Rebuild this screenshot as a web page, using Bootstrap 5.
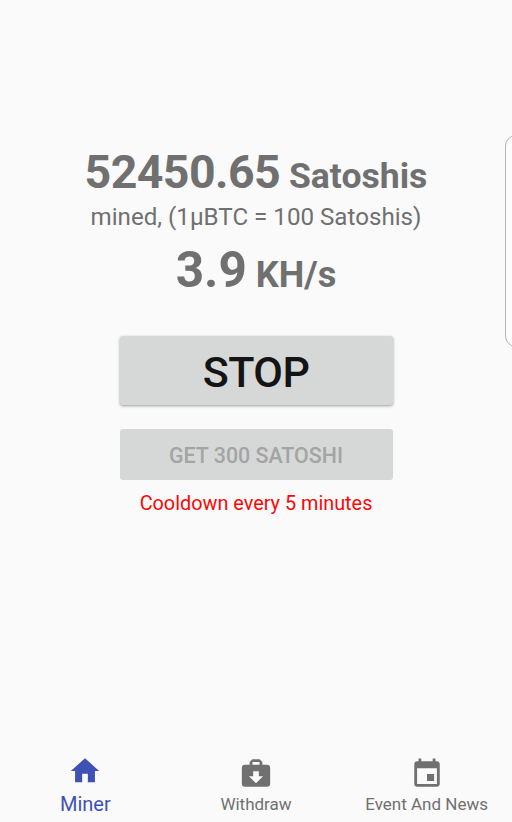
<!DOCTYPE html>
<html lang="en">
<head>
<meta charset="utf-8">
<meta name="viewport" content="width=device-width, initial-scale=1">
<title>Miner</title>
<link href="https://cdn.jsdelivr.net/npm/bootstrap@5.3.0/dist/css/bootstrap.min.css" rel="stylesheet">
<style>
body{font-family:Roboto,sans-serif;background:#fafafa;color:#707070;height:822px;overflow:hidden}
.screen{height:822px;padding-top:144px}
.amount{font-size:46.5px;line-height:56px;font-weight:700}
.amount .num{letter-spacing:-.6px}
.unit{font-size:35.6px;line-height:1;white-space:pre}
.note{font-size:24.150px;line-height:34px}
.rate{font-size:49.5px;line-height:56px;font-weight:700;margin-top:8px}
.rate .unit{font-size:36.2px}
.action{width:273px;background:#d6d8d7;border-radius:3px;font-weight:500}
.action:disabled{background:#d6d8d7;color:#a3a4a4;opacity:1}
.stop{height:69px;margin-top:38px;font-size:43px;letter-spacing:-.5px;line-height:1;color:#141414;box-shadow:0 1px 3px rgba(0,0,0,.38)}
.stop.action{padding-top:3px!important}
.bonus{height:51px;margin-top:24px;font-size:21.4px;line-height:1}
.bonus.action{padding-top:2px!important}
.cooldown{font-size:19.850px;line-height:28px;margin-top:10px;color:#f80808}
.tabs{height:76px}
.tab-item{width:170.67px;color:#707070;font-size:17px;padding-top:10.5px}
.tab-item.active{color:#3f51b5;font-size:20px;padding-top:8px}
.tab-item svg{width:34px;height:34px;flex:none}
.tab-item span{line-height:24px;margin-top:1.5px}
.tab-item.active span{margin-top:3.5px}
.edge{position:absolute;top:135px;right:-30px;width:37px;height:212px;border:1px solid #b5b5b5;border-radius:11px;background:#fcfcfc}
</style>
<script src="https://cdn.jsdelivr.net/npm/bootstrap@5.3.0/dist/js/bootstrap.bundle.min.js"></script>
</head>
<body>
<main class="screen d-flex flex-column align-items-center position-relative overflow-hidden text-nowrap">
  <div class="amount"><span class="num">52450.65</span><span class="unit"> Satoshis</span></div>
  <div class="note">mined, (1µBTC = 100 Satoshis)</div>
  <div class="rate"><span class="num">3.9</span><span class="unit"> KH/s</span></div>
  <button class="btn action stop border-0 p-0" type="button">STOP</button>
  <button class="btn action bonus border-0 p-0" type="button" disabled>GET 300 SATOSHI</button>
  <div class="cooldown">Cooldown every 5 minutes</div>
  <div class="edge"></div>
  <nav class="tabs d-flex w-100 mt-auto">
    <a class="tab-item active d-flex flex-column align-items-center text-decoration-none" href="#">
      <svg viewBox="0 0 24 24" fill="currentColor"><path d="M10 20v-6h4v6h5v-8h3L12 3 2 12h3v8z"/></svg>
      <span>Miner</span>
    </a>
    <a class="tab-item d-flex flex-column align-items-center text-decoration-none" href="#">
      <svg viewBox="0 0 24 24" fill="currentColor"><path fill-rule="evenodd" d="M20 5.500h-3.500V3.500l-2-2h-5l-2 2v2H4c-1.100 0-2 .9-2 2V19c0 1.100.9 2 2 2h16c1.100 0 2-.9 2-2V7.500c0-1.100-.9-2-2-2zM9.500 3.500h5v2h-5zM12 18.500l-5-5h3v-3.500h4v3.500h3z"/></svg>
      <span>Withdraw</span>
    </a>
    <a class="tab-item d-flex flex-column align-items-center text-decoration-none" href="#">
      <svg viewBox="0 0 24 24" fill="currentColor"><path d="M17 12h-5v5h5v-5zM16 1v2H8V1H6v2H5c-1.110 0-1.990.9-1.990 2L3 19c0 1.100.89 2 2 2h14c1.100 0 2-.9 2-2V5c0-1.100-.9-2-2-2h-1V1h-2zm3 18H5V8h14v11z"/></svg>
      <span>Event And News</span>
    </a>
  </nav>
</main>
</body>
</html>
